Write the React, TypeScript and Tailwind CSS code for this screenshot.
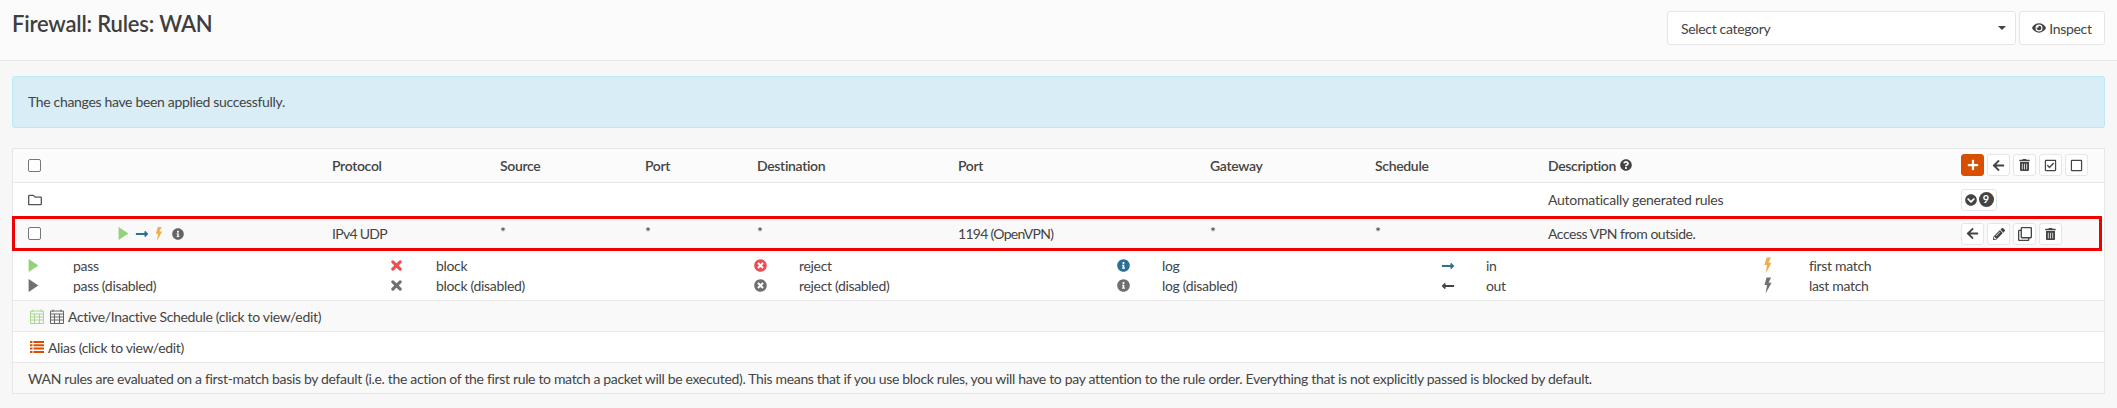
import type { ReactNode } from "react";
import {
  FaArrowLeft,
  FaChevronCircleDown,
  FaEye,
  FaInfoCircle,
  FaLongArrowAltLeft,
  FaLongArrowAltRight,
  FaPencilAlt,
  FaPlus,
  FaQuestionCircle,
  FaRegCheckSquare,
  FaRegClone,
  FaRegFolder,
  FaRegSquare,
  FaTimesCircle,
  FaTrashAlt
} from "react-icons/fa";

const gridCols =
  "grid grid-cols-[90px_214px_168px_145px_112px_201px_252px_165px_173px_413px_1fr] items-center";

function Play({ className }: { className: string }) {
  return (
    <svg viewBox="0 0 12 16" className={className} aria-hidden="true">
      <path d="M0 0 L12 8 L0 16 Z" fill="currentColor" />
    </svg>
  );
}

function Bolt({ className }: { className: string }) {
  return (
    <svg viewBox="0 0 8 16" className={className} aria-hidden="true">
      <path d="M2.6 0 H7 L4.6 5.2 H7.6 L1.6 16 L3 7.6 H0.4 Z" fill="currentColor" />
    </svg>
  );
}

function Cross({ className }: { className: string }) {
  return (
    <svg viewBox="0 0 12 12" className={className} aria-hidden="true">
      <path d="M2 2 L10 10 M10 2 L2 10" fill="none" stroke="currentColor" strokeWidth="3.4" strokeLinecap="round" />
    </svg>
  );
}

function Calendar({ className }: { className: string }) {
  return (
    <svg viewBox="0 0 14 15" className={className} aria-hidden="true">
      <path
        d="M3 0.5 V3 M11 0.5 V3 M0.5 2 H13.5 V14.5 H0.5 Z M0.5 5 H13.5 M0.5 8 H13.5 M0.5 11 H13.5 M4.5 5 V14.5 M9.5 5 V14.5"
        fill="none"
        stroke="currentColor"
        strokeWidth="1"
      />
    </svg>
  );
}

function AliasList({ className }: { className: string }) {
  return (
    <svg viewBox="0 0 14 12" className={className} aria-hidden="true">
      <path
        d="M0 0 H2.5 V2 H0 Z M3.5 0 H14 V2 H3.5 Z M0 3.3 H2.5 V5.3 H0 Z M3.5 3.3 H14 V5.3 H3.5 Z M0 6.6 H2.5 V8.6 H0 Z M3.5 6.6 H14 V8.6 H3.5 Z M0 10 H2.5 V12 H0 Z M3.5 10 H14 V12 H3.5 Z"
        fill="currentColor"
      />
    </svg>
  );
}

function IconButton({ children, wide, primary }: { children: ReactNode; wide?: boolean; primary?: boolean }) {
  return (
    <span
      className={`inline-flex h-[22px] items-center justify-center rounded-[3px] border text-[#444] ${
        wide ? "w-[36px] gap-[2px]" : "w-[23px]"
      } ${primary ? "border-[#d94f00] bg-[#d94f00] text-white" : "border-[#e6e6e6] bg-white"}`}
    >
      {children}
    </span>
  );
}

function Checkbox() {
  return <span className="block h-[13px] w-[13px] rounded-[2px] border border-[#767676] bg-white" />;
}

function LegendItem({ icon, label, width }: { icon: ReactNode; label: string; width: string }) {
  return (
    <div className={`grid grid-cols-[45px_1fr] items-center ${width}`}>
      <span className="flex items-center">{icon}</span>
      <span>{label}</span>
    </div>
  );
}

export default function App() {
  return (
    <div className="min-h-[408px] bg-[#f7f7f7] font-['Lato',sans-serif] text-[14px] tracking-[-0.33px] text-[#444]">
      <header className="flex h-[61px] items-start justify-between border-b border-[#e9e9e9] bg-[#fbfbfb] pl-[12px] pr-[12px]">
        <h1 className="mt-[8px] text-[22px] font-semibold leading-[32px] tracking-[-0.2px] text-[#3f3f3f]">
          Firewall: Rules: WAN
        </h1>
        <div className="mt-[11px] flex gap-[3px]">
          <div className="flex h-[34px] w-[349px] items-center justify-between rounded-[3px] border border-[#e6e6e6] bg-white pl-[13px] pr-[9px]">
            <span>Select category</span>
            <span className="h-0 w-0 border-x-[4px] border-t-[4px] border-x-transparent border-t-[#444]" />
          </div>
          <div className="flex h-[34px] w-[86px] items-center justify-center gap-[3px] rounded-[3px] border border-[#e6e6e6] bg-white">
            <FaEye className="h-[14px] w-[14px]" />
            <span>Inspect</span>
          </div>
        </div>
      </header>

      <main className="px-[12px] pt-[15px]">
        <div className="flex h-[52px] items-center rounded-[3px] border border-[#bce8f1] bg-[#d9edf7] pb-px pl-[15px]">
          The changes have been applied successfully.
        </div>

        <section className="mt-[20px] border border-[#e7e7e7] bg-white">
          <div className={`${gridCols} h-[34px] border-b border-[#e7e7e7] bg-[#fbfbfb] pb-px pl-[15px] font-semibold`}>
            <Checkbox />
            <span />
            <span>Protocol</span>
            <span>Source</span>
            <span>Port</span>
            <span>Destination</span>
            <span>Port</span>
            <span>Gateway</span>
            <span>Schedule</span>
            <span className="flex items-center gap-[4px]">
              Description <FaQuestionCircle className="h-[12px] w-[12px]" />
            </span>
            <div className="flex gap-[3px]">
              <IconButton primary><FaPlus className="h-[12px] w-[12px]" /></IconButton>
              <IconButton><FaArrowLeft className="h-[13px] w-[13px]" /></IconButton>
              <IconButton><FaTrashAlt className="h-[12px] w-[11px]" /></IconButton>
              <IconButton><FaRegCheckSquare className="h-[13px] w-[13px]" /></IconButton>
              <IconButton><FaRegSquare className="h-[13px] w-[13px]" /></IconButton>
            </div>
          </div>

          <div className={`${gridCols} h-[33px] pl-[15px]`}>
            <FaRegFolder className="h-[14px] w-[14px] text-[#555]" />
            <span />
            <span />
            <span />
            <span />
            <span />
            <span />
            <span />
            <span />
            <span className="tracking-[-0.25px]">Automatically generated rules</span>
            <div className="flex">
              <IconButton wide>
                <FaChevronCircleDown className="h-[12px] w-[12px]" />
                <span className="flex h-[15px] w-[15px] items-center justify-center rounded-full bg-[#444] text-[11px] font-bold tracking-normal text-white">
                  9
                </span>
              </IconButton>
            </div>
          </div>

          <div className={`${gridCols} -ml-px mr-[2px] h-[35px] border-[3px] border-[#f00000] bg-[#f9f9f9] pl-[13px]`}>
            <Checkbox />
            <span className="flex items-center">
              <Play className="h-[13px] w-[11px] text-[#94d17c]" />
              <FaLongArrowAltRight className="ml-[6px] h-[14px] w-[14px] text-[#2f6f94]" />
              <Bolt className="ml-[6px] h-[14px] w-[8px] text-[#f0ad4e]" />
              <FaInfoCircle className="ml-[9px] h-[12px] w-[12px] text-[#666]" />
            </span>
            <span className="tracking-[-0.7px]">IPv4 UDP</span>
            <span className="-translate-y-[2px]">*</span>
            <span className="-translate-y-[2px]">*</span>
            <span className="-translate-y-[2px]">*</span>
            <span className="tracking-[-0.7px]">1194 (OpenVPN)</span>
            <span className="-translate-y-[2px]">*</span>
            <span className="-translate-y-[2px]">*</span>
            <span className="tracking-[-0.47px]">Access VPN from outside.</span>
            <div className="flex gap-[3px]">
              <IconButton><FaArrowLeft className="h-[13px] w-[13px]" /></IconButton>
              <IconButton><FaPencilAlt className="h-[12px] w-[12px]" /></IconButton>
              <IconButton><FaRegClone className="h-[14px] w-[14px]" /></IconButton>
              <IconButton><FaTrashAlt className="h-[12px] w-[11px]" /></IconButton>
            </div>
          </div>

          <div className="flex h-[49px] flex-col justify-center gap-[2px] pl-[15px] leading-[18px]">
            <div className="flex">
              <LegendItem width="w-[363px]" label="pass" icon={<Play className="h-[13px] w-[11px] text-[#94d17c]" />} />
              <LegendItem width="w-[363px]" label="block" icon={<Cross className="h-[11px] w-[11px] text-[#ef4d52]" />} />
              <LegendItem width="w-[363px]" label="reject" icon={<FaTimesCircle className="h-[13px] w-[13px] text-[#ef4d52]" />} />
              <LegendItem width="w-[324px]" label="log" icon={<FaInfoCircle className="h-[13px] w-[13px] text-[#2f6f94]" />} />
              <LegendItem width="w-[323px]" label="in" icon={<FaLongArrowAltRight className="h-[14px] w-[14px] text-[#2f6f94]" />} />
              <LegendItem width="w-[200px]" label="first match" icon={<Bolt className="h-[17px] w-[8px] text-[#f0ad4e]" />} />
            </div>
            <div className="flex">
              <LegendItem width="w-[363px]" label="pass (disabled)" icon={<Play className="h-[13px] w-[11px] text-[#707070]" />} />
              <LegendItem width="w-[363px]" label="block (disabled)" icon={<Cross className="h-[11px] w-[11px] text-[#707070]" />} />
              <LegendItem width="w-[363px]" label="reject (disabled)" icon={<FaTimesCircle className="h-[13px] w-[13px] text-[#707070]" />} />
              <LegendItem width="w-[324px]" label="log (disabled)" icon={<FaInfoCircle className="h-[13px] w-[13px] text-[#707070]" />} />
              <LegendItem width="w-[323px]" label="out" icon={<FaLongArrowAltLeft className="h-[14px] w-[14px] text-[#444]" />} />
              <LegendItem width="w-[200px]" label="last match" icon={<Bolt className="h-[17px] w-[8px] text-[#707070]" />} />
            </div>
          </div>

          <div className="flex h-[31px] items-center gap-[4px] border-t border-[#e7e7e7] bg-[#f9f9f9] pl-[17px]">
            <Calendar className="h-[15px] w-[14px] text-[#a9d68f]" />
            <Calendar className="ml-[2px] h-[15px] w-[14px] text-[#666]" />
            <span>Active/Inactive Schedule (click to view/edit)</span>
          </div>
          <div className="flex h-[31px] items-center gap-[4px] border-t border-[#e7e7e7] pl-[17px]">
            <AliasList className="h-[12px] w-[14px] text-[#d94f00]" />
            <span>Alias (click to view/edit)</span>
          </div>
          <div className="flex h-[31px] items-center border-t border-[#e7e7e7] bg-[#f9f9f9] pl-[15px]">
            WAN rules are evaluated on a first-match basis by default (i.e. the action of the first rule to match a packet will be executed). This means that if you use block rules, you will have to pay attention to the rule order. Everything that is not explicitly passed is blocked by default.
          </div>
        </section>
      </main>
    </div>
  );
}
